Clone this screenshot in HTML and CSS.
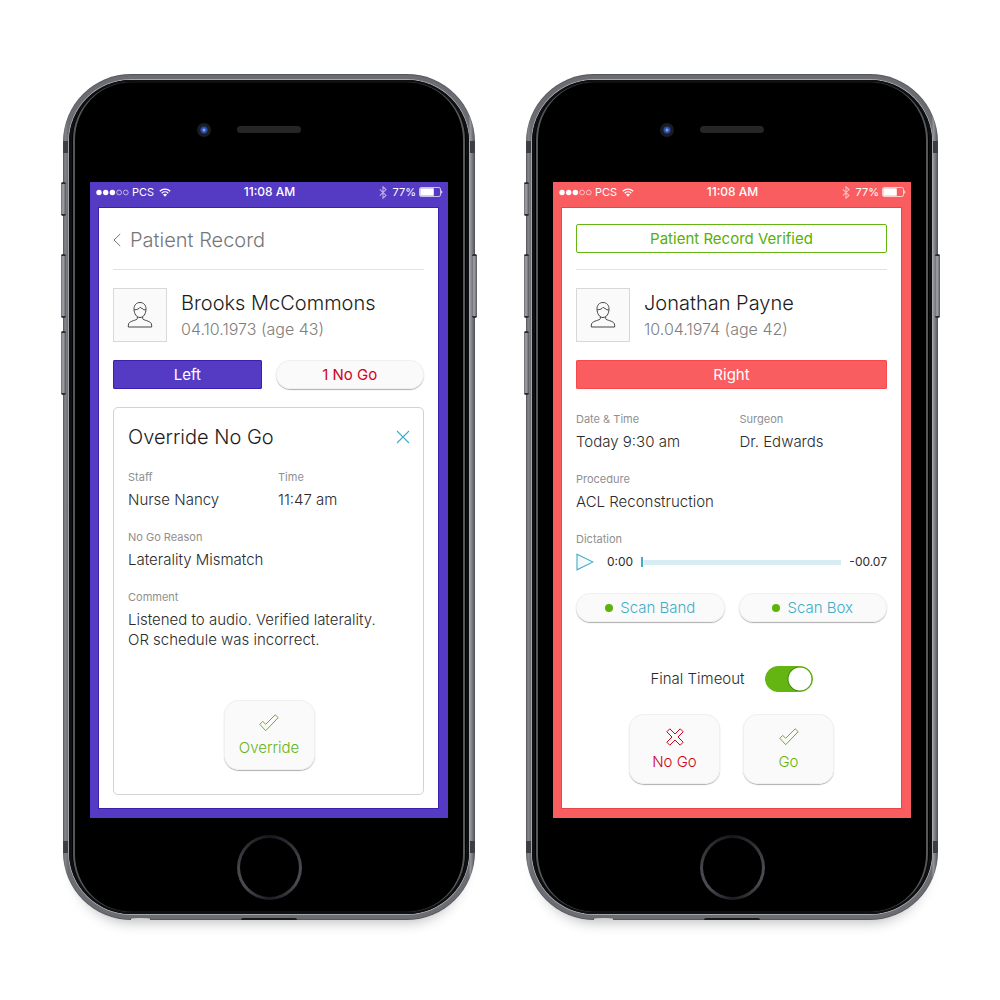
FILE: index.html
```html
<!DOCTYPE html>
<html lang="en">
<head>
<meta charset="utf-8">
<meta name="viewport" content="width=device-width, initial-scale=1">
<title>Patient Record</title>
<link rel="stylesheet" href="styles.css">
</head>
<body>
<svg class="sprite" aria-hidden="true">
  <symbol id="signal" viewBox="0 0 33 7">
    <circle cx="3" cy="3.5" r="2.7" fill="currentColor"/><circle cx="9.7" cy="3.5" r="2.7" fill="currentColor"/><circle cx="16.4" cy="3.5" r="2.7" fill="currentColor"/>
    <circle cx="23.1" cy="3.5" r="2.4" fill="none" stroke="currentColor" stroke-width=".6"/><circle cx="29.8" cy="3.5" r="2.4" fill="none" stroke="currentColor" stroke-width=".6"/>
  </symbol>
  <symbol id="wifi" viewBox="0 0 12 9">
    <path d="M.8 3.2a7.6 7.6 0 0 1 10.4 0M2.7 5.2a4.8 4.8 0 0 1 6.6 0" fill="none" stroke="currentColor" stroke-width="1.3"/>
    <path d="M4 6.6a2.9 2.9 0 0 1 4 0L6 8.8z" fill="currentColor"/>
  </symbol>
  <symbol id="bluetooth" viewBox="0 0 8 13">
    <path d="M.8 3.4 7 9.4 4 12.2V.8L7 3.6.8 9.6" fill="none" stroke="currentColor" stroke-width="1.1"/>
  </symbol>
  <symbol id="battery" viewBox="0 0 24 10">
    <rect x=".5" y=".5" width="21" height="9" rx="1.6" fill="none" stroke="currentColor" stroke-width=".7"/>
    <rect x="1.2" y="1.2" width="13.6" height="7.6" rx=".6" fill="currentColor"/>
    <path d="M22.3 3.2c1.4.6 1.4 3 0 3.6z" fill="currentColor"/>
  </symbol>
  <symbol id="person" viewBox="0 0 26 28">
    <g fill="none" stroke="currentColor" stroke-width="1" stroke-linejoin="round">
      <path d="M13 1.5c3.6 0 6 2.6 6 6.4 0 4.8-2.5 8.6-6 8.6s-6-3.8-6-8.6c0-3.8 2.4-6.4 6-6.4z"/>
      <path d="M7.2 8.8c2.7 0 4.8-.8 6-2.6 1 1.4 2.9 1.2 3.6 2.6.6 0 1.4.1 2 0"/>
      <path d="M10.3 15.5v2.3c-.5 1.5-7.4 2-8.6 4.8-.4 1-.4 2.1-.4 3.400h23.400c0-1.300 0-2.400-.4-3.400-1.200-2.800-8.100-3.300-8.600-4.800v-2.300"/>
    </g>
  </symbol>
  <symbol id="check" viewBox="0 0 20 18">
    <path d="M.8 10.300 3.700 7.400 6.700 10.300 16.200.8 19.200 3.700 6.700 16.700z" fill="none" stroke="currentColor" stroke-width="1" stroke-linejoin="round"/>
  </symbol>
  <symbol id="cross" viewBox="0 0 18 18">
    <path d="M3.800.8 9 6 14.200.8 17.200 3.800 12 9 17.200 14.200 14.200 17.200 9 12 3.800 17.200.8 14.200 6 9 .8 3.800z" fill="none" stroke="currentColor" stroke-width="1" stroke-linejoin="round"/>
  </symbol>
</svg>

<main class="stage">
  <section class="phone phone-purple" aria-label="Override">
    <span class="key key-mute"></span><span class="key key-up"></span><span class="key key-down"></span><span class="key key-power"></span>
    <span class="port"></span><span class="jack"></span>
    <div class="bezel-top"><span class="camera"></span><span class="speaker"></span></div>
    <div class="screen">
      <div class="status">
        <div class="status-left"><svg width="33" height="7"><use href="#signal"/></svg><span>PCS</span><svg width="12" height="9"><use href="#wifi"/></svg></div>
        <span class="clock">11:08 AM</span>
        <div class="status-right"><svg class="dim" width="8" height="13"><use href="#bluetooth"/></svg><span>77%</span><svg width="24" height="10"><use href="#battery"/></svg></div>
      </div>
      <div class="panel">
        <header class="top">
          <a class="back" href="#"><svg width="8" height="14" viewBox="0 0 8 14"><path d="M7.200 1 1 7l6.200 6" fill="none" stroke="currentColor" stroke-width="1"/></svg>Patient Record</a>
        </header>
        <div class="patient">
          <div class="avatar"><svg width="26" height="28"><use href="#person"/></svg></div>
          <div><h1>Brooks McCommons</h1><p>04.10.1973 (age 43)</p></div>
        </div>
        <div class="pair">
          <button class="side" type="button">Left</button>
          <button class="pill red" type="button">1 No Go</button>
        </div>
        <section class="card">
          <div class="card-head">
            <h2>Override No Go</h2>
            <button class="icon-button" type="button" aria-label="Close"><svg width="14" height="14" viewBox="0 0 14 14"><path d="M1 1l12 12M13 1 1 13" stroke="currentColor" stroke-width="1.100"/></svg></button>
          </div>
          <dl class="fields fields-card">
            <div><dt>Staff</dt><dd>Nurse Nancy</dd></div>
            <div><dt>Time</dt><dd>11:47 am</dd></div>
            <div class="wide"><dt>No Go Reason</dt><dd>Laterality Mismatch</dd></div>
            <div class="wide"><dt>Comment</dt><dd>Listened to audio. Verified laterality.<br>OR schedule was incorrect.</dd></div>
          </dl>
          <div class="actions">
            <button class="tile green" type="button"><svg width="20" height="18"><use href="#check"/></svg>Override</button>
          </div>
        </section>
      </div>
    </div>
    <div class="bezel-bottom"><span class="home"></span></div>
  </section>

  <section class="phone phone-red" aria-label="Verification">
    <span class="key key-mute"></span><span class="key key-up"></span><span class="key key-down"></span><span class="key key-power"></span>
    <span class="port"></span><span class="jack"></span>
    <div class="bezel-top"><span class="camera"></span><span class="speaker"></span></div>
    <div class="screen">
      <div class="status">
        <div class="status-left"><svg width="33" height="7"><use href="#signal"/></svg><span>PCS</span><svg width="12" height="9"><use href="#wifi"/></svg></div>
        <span class="clock">11:08 AM</span>
        <div class="status-right"><svg class="dim" width="8" height="13"><use href="#bluetooth"/></svg><span>77%</span><svg width="24" height="10"><use href="#battery"/></svg></div>
      </div>
      <div class="panel panel-roomy">
        <header class="top"><div class="verified">Patient Record Verified</div></header>
        <div class="patient">
          <div class="avatar"><svg width="26" height="28"><use href="#person"/></svg></div>
          <div><h1>Jonathan Payne</h1><p>10.04.1974 (age 42)</p></div>
        </div>
        <button class="side" type="button">Right</button>
        <dl class="fields">
          <div><dt>Date &amp; Time</dt><dd>Today 9:30 am</dd></div>
          <div><dt>Surgeon</dt><dd>Dr. Edwards</dd></div>
          <div class="wide"><dt>Procedure</dt><dd>ACL Reconstruction</dd></div>
        </dl>
        <div class="dictation">
          <label for="seek">Dictation</label>
          <div class="player">
            <button class="icon-button" type="button" aria-label="Play"><svg width="18" height="18" viewBox="0 0 18 18"><path d="M1 1.200 17 9 1 16.800z" fill="#f4fafc" stroke="currentColor" stroke-width="1.100"/></svg></button>
            <span>0:00</span>
            <input id="seek" type="range" min="0" max="7" value="0">
            <span>-00.07</span>
          </div>
        </div>
        <div class="pair scans">
          <button class="pill blue" type="button"><span class="dot"></span>Scan Band</button>
          <button class="pill blue" type="button"><span class="dot"></span>Scan Box</button>
        </div>
        <div class="timeout">
          <label for="timeout">Final Timeout</label>
          <input id="timeout" class="toggle" type="checkbox" checked>
        </div>
        <div class="actions">
          <button class="tile red" type="button"><svg width="18" height="18"><use href="#cross"/></svg>No Go</button>
          <button class="tile green" type="button"><svg width="20" height="18"><use href="#check"/></svg>Go</button>
        </div>
      </div>
    </div>
    <div class="bezel-bottom"><span class="home"></span></div>
  </section>
</main>
</body>
</html>
```
FILE: styles.css
```css
*, *::before, *::after { box-sizing: border-box; }
body {
  margin: 0;
  background: #fff;
  color: #2b2b2b;
  font-family: Inter, "Liberation Sans", sans-serif;
  font-size: 15px;
  font-weight: 300;
  line-height: 20px;
}
h1, h2, p, dl, dd { margin: 0; font-weight: 300; }
button, input { margin: 0; font: inherit; }
button { padding: 0; border: 0; cursor: pointer; }
svg { display: block; flex: none; }
.sprite { position: absolute; width: 0; height: 0; }

.stage {
  display: grid;
  grid-template-columns: repeat(auto-fit, minmax(380px, 1fr));
  gap: 51px;
  padding: 74px 62px 74px 63px;
}

/* Handset */
.phone {
  position: relative;
  z-index: 0;
  display: flex;
  flex-direction: column;
  padding: 0 27px;
  border-radius: 68px;
  background:
    linear-gradient(#3d3e43, #3d3e43) 0 67px / 100% 12px no-repeat,
    linear-gradient(#3d3e43, #3d3e43) 0 767px / 100% 12px no-repeat,
    linear-gradient(90deg, #55565b, #85868c 2px, #6c6d73 5px, #6c6d73 calc(100% - 6px), #9a9ba1 calc(100% - 5px), #505157);
  box-shadow: inset 0 1px 1px #55565b, inset 0 -1px 1px #55565b, 0 14px 14px -12px rgba(0, 0, 0, .28);
}
.phone-purple { --tone: #553ac4; --edge: #3c1fae; }
.phone-red { --tone: #f95d60; --edge: #e64649; }
.phone::before {
  content: "";
  position: absolute;
  z-index: -1;
  inset: 6px;
  border-radius: 62px;
  background: #000;
  box-shadow: 0 0 0 1px #a5a6aa, inset 0 0 0 3px #0e0f10;
}
.phone::after {
  content: "";
  position: absolute;
  z-index: -1;
  inset: 8px 10px;
  border: solid #55585a;
  border-width: 0 2px;
  border-radius: 58px;
}
.key {
  position: absolute;
  z-index: -2;
  left: -2px;
  width: 5px;
  height: 64px;
  border: solid #2c2d30;
  border-width: 2px 0;
  border-radius: 2px;
  background: linear-gradient(90deg, #6a6b70, #a5a6ab 2px, #55565b);
}
.key-mute { top: 108px; height: 34px; }
.key-up { top: 180px; }
.key-down { top: 257px; }
.key-power { top: 180px; right: -2px; left: auto; }
.port, .jack { position: absolute; bottom: 0; height: 2px; }
.port { left: calc(50% - 28px); width: 56px; border-radius: 2px 2px 0 0; background: #1a1a1c; }
.jack { left: 68px; width: 19px; border-radius: 50% 50% 0 0; background: #d4d4d6; }

.bezel-top {
  display: grid;
  grid-template-columns: 1fr auto 1fr;
  align-items: center;
  height: 108px;
  padding-top: 3px;
}
.camera {
  justify-self: end;
  width: 14px;
  height: 14px;
  margin-right: 26px;
  border: 3px solid #1c1c1e;
  border-radius: 50%;
  background: radial-gradient(circle, #7f9de8 0 1px, #2c4ca8 2px 3px, #14224e 4px);
}
.speaker { width: 64px; height: 7px; border-radius: 4px; background: #262626; }
.bezel-bottom { display: flex; justify-content: center; height: 102px; padding-top: 17px; }
.home {
  width: 65px;
  height: 65px;
  border: 3px solid transparent;
  border-radius: 50%;
  background:
    linear-gradient(#000, #000) padding-box,
    conic-gradient(#16161c, #4a4a50 25%, #4a4a50 33%, #1c1c22 50%, #4a4a50 64%, #4a4a50 72%, #16161c) border-box;
}

/* Screen */
.screen {
  display: flex;
  flex-direction: column;
  min-height: 636px;
  padding: 0 10px 10px 9px;
  background: var(--tone);
}
.status {
  display: grid;
  grid-template-columns: 1fr auto 1fr;
  align-items: center;
  height: 26px;
  margin: 0 -5px 0 -3px;
  padding-bottom: 6px;
  color: #fff;
  font-size: 11px;
  line-height: 14px;
}
.clock { font-size: 12px; font-weight: 500; }
.status-left, .status-right { display: flex; align-items: center; font-weight: 400; }
.status-left { gap: 3px; }
.status-left svg:last-child { margin-left: 2px; }
.status-right { justify-content: flex-end; gap: 3px; }
.dim { margin-right: 3px; opacity: .6; }
.panel {
  display: flex;
  flex: 1;
  flex-direction: column;
  padding: 0 14px 13px;
  background: #fff;
  box-shadow: 0 0 0 1px var(--edge);
}
.panel-roomy { padding-bottom: 24px; }
.top { display: flex; align-items: center; height: 62px; border-bottom: 1px solid #e3e3e3; }
.back { display: flex; align-items: center; gap: 9px; padding-top: 3px; color: #777; font-size: 20px; line-height: 24px; text-decoration: none; }
.verified {
  flex: 1;
  height: 29px;
  border: 1px solid #65b512;
  border-radius: 2px;
  color: #58b000;
  font-weight: 400;
  line-height: 27px;
  text-align: center;
}
.patient { display: flex; align-items: center; gap: 14px; margin: 18px 0; }
.patient h1 { color: #1c1c1c; font-size: 20px; line-height: 24px; }
.patient p { margin-top: 4px; color: #808080; font-size: 16px; }
.avatar {
  display: grid;
  place-items: center;
  width: 54px;
  height: 54px;
  border: 1px solid #d8d8d8;
  background: #fafafa;
  color: #444;
}
.pair { display: grid; grid-template-columns: 1fr 1fr; gap: 14px; }
.side { height: 29px; border-radius: 2px; background: var(--tone); box-shadow: inset 0 0 0 1px var(--edge); color: #fff; font-weight: 400; }
.phone-red .side { box-shadow: inset 0 0 0 1px #f7484c; }
.pill, .tile {
  background: #fafafa;
  box-shadow: inset 0 0 0 1px #f0f0f0, 0 1px 1px #b0b0b0;
}
.pill { display: flex; align-items: center; justify-content: center; gap: 7px; height: 29px; border-radius: 15px; }
.red { color: #d0021b; }
.pill.red { font-weight: 400; }
.green { color: #65b512; }
.blue { color: #3fadc8; }
.dot { width: 8px; height: 8px; border-radius: 50%; background: #5cb30a; }

.card {
  display: flex;
  flex: 1;
  flex-direction: column;
  margin-top: 18px;
  padding: 17px 13px 24px 14px;
  border: 1px solid #d2d2d2;
  border-radius: 5px;
}
.card-head { display: flex; align-items: center; justify-content: space-between; margin-bottom: 20px; }
.card-head h2 { color: #1c1c1c; font-size: 20px; line-height: 24px; }
.icon-button { background: none; color: #3fadc8; }
.fields { display: grid; grid-template-columns: 1fr 1fr; gap: 19px 16px; margin-top: 22px; }
.fields-card { column-gap: 18px; margin-top: 0; }
.wide { grid-column: 1 / -1; }
dt, .dictation label { display: block; margin-bottom: 5px; color: #8f8f8f; font-size: 11px; font-weight: 400; line-height: 16px; }

.actions { display: flex; justify-content: center; gap: 23px; margin-top: auto; }
.tile {
  display: flex;
  flex-direction: column;
  align-items: center;
  justify-content: center;
  gap: 6px;
  width: 91px;
  height: 70px;
  padding-top: 2px;
  border-radius: 15px;
}

.dictation { margin-top: 19px; }
.player { display: flex; align-items: center; height: 20px; font-size: 12px; font-weight: 400; }
.player .icon-button { margin-right: 13px; }
.player input {
  flex: 1;
  min-width: 0;
  height: 12px;
  margin: 0 8px;
  background: linear-gradient(#d8edf3, #d8edf3) center / 100% 5px no-repeat;
  appearance: none;
}
.player input::-webkit-slider-thumb {
  width: 3px;
  height: 10px;
  border-right: 1px solid #fff;
  background: #3fadc8;
  appearance: none;
}
.scans { margin-top: 21px; }
.timeout { display: flex; align-items: center; justify-content: center; gap: 20px; margin-top: 44px; }
.toggle {
  width: 48px;
  height: 26px;
  border: 1px solid #65b512;
  border-radius: 13px;
  background: radial-gradient(circle at 34px 12px, #fff 11px, #3f8a05 12px, transparent 13px), #65b512;
  appearance: none;
}
```
